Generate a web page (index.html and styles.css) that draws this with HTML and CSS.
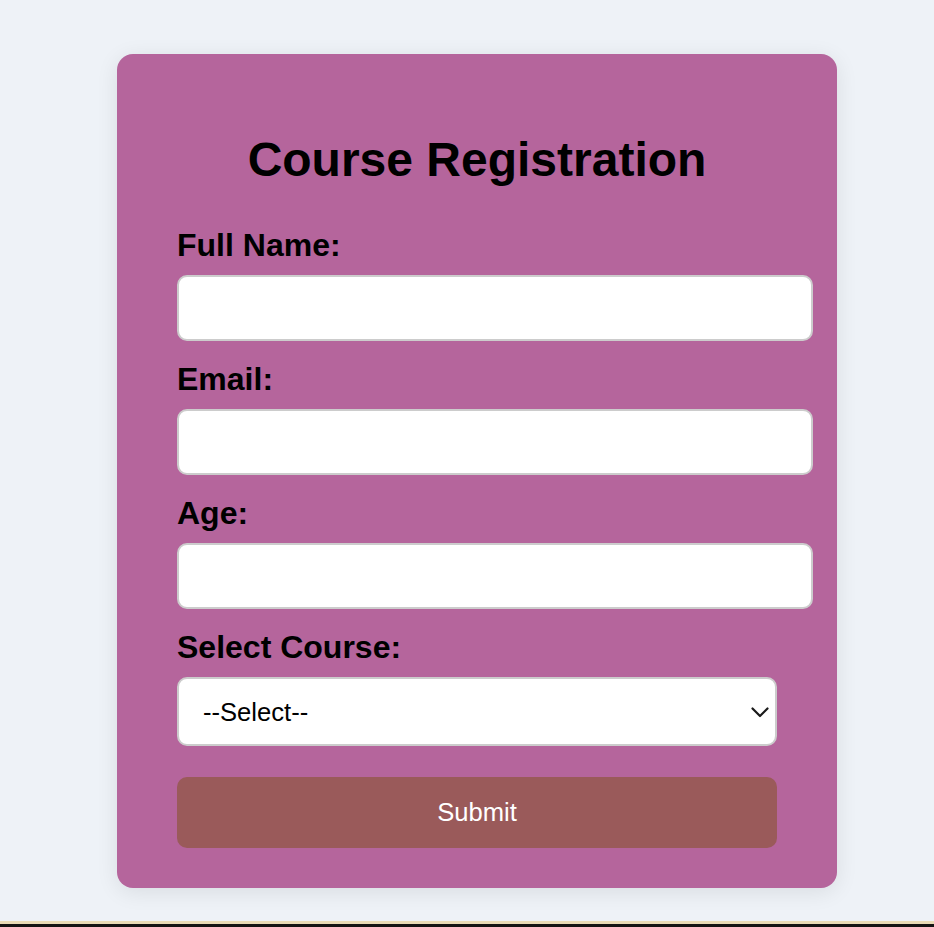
FILE: index.html
```html
<!DOCTYPE html>
<html lang="en">
<head>
<meta charset="utf-8">
<title>Course Registration</title>
<link rel="stylesheet" href="styles.css">
</head>
<body>
<div class="card">
  <h1 class="title">Course Registration</h1>
  <form class="form">
    <label class="label" for="name">Full Name:</label>
    <input class="field" id="name" type="text">
    <label class="label" for="email">Email:</label>
    <input class="field" id="email" type="email">
    <label class="label" for="age">Age:</label>
    <input class="field" id="age" type="number">
    <label class="label" for="course">Select Course:</label>
    <div class="select-wrap">
      <select class="select" id="course">
        <option>--Select--</option>
      </select>
      <svg class="chevron" width="18" height="11" viewBox="0 0 18 11" aria-hidden="true">
        <path d="M1.5 1.5 L9 9 L16.5 1.5" fill="none" stroke="#1a1a1a" stroke-width="2.2" stroke-linecap="round" stroke-linejoin="round"/>
      </svg>
    </div>
    <button class="submit" type="button">Submit</button>
  </form>
</div>
<div class="bottom-strip"></div>
</body>
</html>
```
FILE: styles.css
```css
html, body {
  margin: 0;
  padding: 0;
}
body {
  background: #eef2f7;
  font-family: "Liberation Sans", Arial, sans-serif;
  min-height: 927px;
}
.card {
  box-sizing: border-box;
  width: 720px;
  margin: 54px 0 0 117px;
  padding: 40px 60px 40px 60px;
  background: #b5659c;
  border-radius: 16px;
  box-shadow: 0 4px 22px rgba(0, 0, 0, 0.09);
}
.title {
  margin: 38px 0 39px 0;
  font-size: 48px;
  line-height: 56px;
  font-weight: bold;
  text-align: center;
  color: #000;
}
.form {
  display: flex;
  flex-direction: column;
  align-items: flex-start;
}
.label {
  display: block;
  font-size: 32px;
  line-height: 37px;
  font-weight: bold;
  color: #000;
  margin-bottom: 11px;
}
.field {
  box-sizing: content-box;
  width: 100%;
  height: 30px;
  padding: 16px;
  border: 2px solid #cccccc;
  border-radius: 10px;
  background: #fff;
  font-family: "Liberation Sans", Arial, sans-serif;
  font-size: 25.6px;
  margin: 0 0 20px 0;
  outline: none;
}
.select-wrap {
  position: relative;
  width: 600px;
  margin: 0 0 31px 0;
}
.select {
  display: block;
  box-sizing: border-box;
  width: 600px;
  height: 69px;
  padding: 0 40px 0 24px;
  border: 2px solid #cccccc;
  border-radius: 10px;
  background-color: #fff;
  color: #000;
  font-family: "Liberation Sans", Arial, sans-serif;
  font-size: 25.6px;
  -webkit-appearance: none;
  appearance: none;
  margin: 0;
}
.chevron {
  position: absolute;
  right: 8px;
  top: 30px;
  pointer-events: none;
}
.submit {
  box-sizing: border-box;
  width: 600px;
  height: 71px;
  border: none;
  border-radius: 10px;
  background: #9a5a5a;
  color: #fff;
  font-family: "Liberation Sans", Arial, sans-serif;
  font-size: 25.6px;
  cursor: pointer;
}
.bottom-strip {
  position: fixed;
  left: 0;
  right: 0;
  bottom: 0;
  height: 3px;
  background: #141414;
  border-top: 3px solid #e9dbb6;
}
```
